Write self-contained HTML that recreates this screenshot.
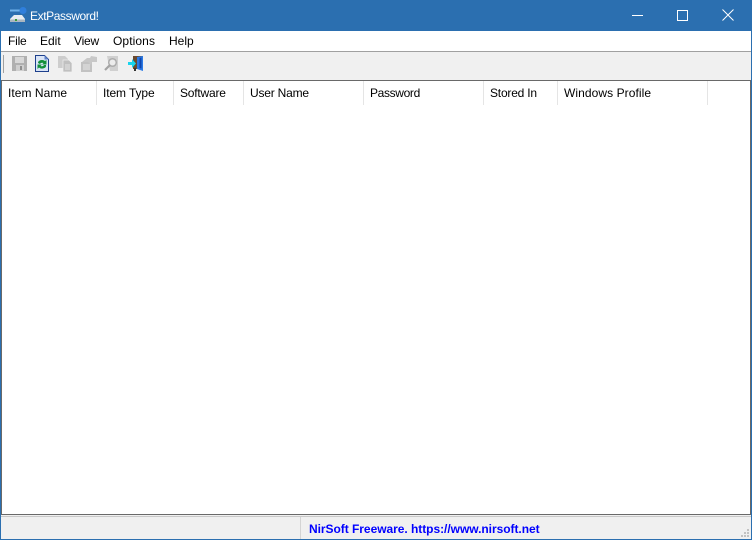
<!DOCTYPE html>
<html>
<head>
<meta charset="utf-8">
<style>
html,body{margin:0;padding:0;background:#fff}
#w{position:relative;width:752px;height:540px;overflow:hidden;background:#f0f0f0;font-family:"Liberation Sans",sans-serif;font-size:12px;color:#000}
#w div,#w svg{position:absolute}
.t{white-space:nowrap;line-height:16px;height:16px}
.sep{top:81px;width:1px;height:24px;background:#e5e5e5}
.g{width:2px;height:2px;background:#c2c2c2}
</style>
</head>
<body>
<div id="w">
<div style="left:0;top:0;width:752px;height:31px;background:#2b6fb0"></div>
<div style="left:0;top:31px;width:1px;height:509px;background:#2b6fb0"></div>
<div style="left:751px;top:31px;width:1px;height:509px;background:#2b6fb0"></div>
<div style="left:0;top:539px;width:752px;height:1px;background:#2b6fb0"></div>

<svg style="left:9px;top:7px" width="18" height="16" viewBox="0 0 18 16">
<path d="M1 3.500h12" stroke="#6fb2ea" stroke-width="2"/>
<circle cx="14" cy="3.500" r="3.500" fill="#2f7fdc"/>
<path d="M1 12l4-4h8l3 4v2H1z" fill="#e8eef2"/>
<path d="M1 12.500h15V15H1z" fill="#aab6c0"/>
<rect x="6" y="12" width="2" height="2" fill="#3a9a3a"/>
</svg>
<div class="t" style="left:30px;top:8px;color:#fff;letter-spacing:-.4px">ExtPassword!</div>

<div style="left:632px;top:15px;width:11px;height:1px;background:#fff"></div>
<div style="left:677px;top:10px;width:9px;height:9px;border:1px solid #fff"></div>
<svg style="left:722px;top:9px" width="12" height="12" viewBox="0 0 12 12"><path d="M.5.5l11 11M11.500.5l-11 11" stroke="#fff" stroke-width="1" fill="none"/></svg>

<div style="left:1px;top:31px;width:750px;height:20px;background:#fff"></div>
<div class="t" style="left:8px;top:33px;letter-spacing:-.2px">File</div>
<div class="t" style="left:40px;top:33px">Edit</div>
<div class="t" style="left:74px;top:33px;letter-spacing:-.2px">View</div>
<div class="t" style="left:113px;top:33px;letter-spacing:.1px">Options</div>
<div class="t" style="left:169px;top:33px">Help</div>

<div style="left:1px;top:51px;width:750px;height:1px;background:#a0a0a0"></div>
<div style="left:3px;top:55px;width:1px;height:18px;background:#a0a0a0"></div>

<svg style="left:12px;top:56px" width="15" height="15" viewBox="0 0 15 15"><path d="M0 0h15v15H0z" fill="#b0b0b0"/><path d="M3 1h9v6H3z" fill="#d8d8d8"/><path d="M4 9h8v6H4z" fill="#cfcfcf"/><path d="M8 10h2v4H8z" fill="#8f8f8f"/></svg>

<svg style="left:35px;top:55px" width="14" height="17" viewBox="0 0 14 17"><path d="M.5.500h9l4 4v12H.5z" fill="#d9e4f6" stroke="#1d3f8c"/><path d="M9.500.5l4 4h-4z" fill="#5f82cc"/><path d="M3 8a4 3 0 0 1 7-2l1.500-1v4.500H7l1.500-1.500a2.500 2 0 0 0-3.500 1z" fill="#12903a"/><path d="M11 10a4 3 0 0 1-7 2.500L2.500 14V9.500H7L5.500 11a2.500 2 0 0 0 3.500-1z" fill="#12903a"/></svg>

<svg style="left:58px;top:56px" width="15" height="16" viewBox="0 0 15 16"><path d="M0 0h7l3 3v9H0z" fill="#cdcdcd"/><path d="M5 4h6l3 3v9H5z" fill="#c0c0c0" stroke="#f0f0f0" stroke-width=".7"/><path d="M7 9h5M7 11h5M7 13h5" stroke="#e3e3e3"/></svg>

<svg style="left:81px;top:56px" width="16" height="16" viewBox="0 0 16 16"><path d="M0 6h11v10H0z" fill="#c2c2c2"/><path d="M2 9h7M2 11h7M2 13h7" stroke="#e6e6e6"/><path d="M1 6l5-4h3l1-2 6 1v5h-5l-1 3-3-3z" fill="#c8c8c8"/></svg>

<svg style="left:104px;top:56px" width="15" height="16" viewBox="0 0 15 16"><path d="M3 0h11v15H6z" fill="#d0d0d0"/><circle cx="8.500" cy="6.500" r="3.800" fill="#ececec" stroke="#adadad" stroke-width="1.500"/><path d="M6 9l-5 5" stroke="#a4a4a4" stroke-width="2.200"/></svg>

<svg style="left:127px;top:55px" width="17" height="17" viewBox="0 0 17 17"><path d="M6 1h10v13H6z" fill="#6a4a30"/><path d="M10 2l6-1v15l-6-2z" fill="#2a7ae6"/><path d="M12.500 3l2-.5v11l-2-.5z" fill="#0e45ad"/><path d="M1 7h4V4l4 4.500L5 13v-3H1z" fill="#18d4ee"/><path d="M7 13h2v3H7z" fill="#333"/></svg>

<div style="left:1px;top:80px;width:750px;height:435px;background:#fff;box-sizing:border-box;border:1px solid #696969"></div>

<div class="sep" style="left:96px"></div>
<div class="sep" style="left:173px"></div>
<div class="sep" style="left:243px"></div>
<div class="sep" style="left:363px"></div>
<div class="sep" style="left:483px"></div>
<div class="sep" style="left:557px"></div>
<div class="sep" style="left:707px"></div>

<div class="t" style="left:8px;top:85px;letter-spacing:.05px">Item Name</div>
<div class="t" style="left:103px;top:85px;letter-spacing:-.1px">Item Type</div>
<div class="t" style="left:180px;top:85px;letter-spacing:-.2px">Software</div>
<div class="t" style="left:250px;top:85px;letter-spacing:-.2px">User Name</div>
<div class="t" style="left:370px;top:85px;letter-spacing:-.35px">Password</div>
<div class="t" style="left:490px;top:85px;letter-spacing:-.2px">Stored In</div>
<div class="t" style="left:564px;top:85px;letter-spacing:.07px">Windows Profile</div>

<div style="left:1px;top:516px;width:750px;height:1px;background:#c8c8c8"></div>
<div style="left:300px;top:517px;width:1px;height:22px;background:#d4d4d4"></div>
<div class="t" style="left:309px;top:521px;color:#0000ff;font-weight:bold;letter-spacing:-.04px">NirSoft Freeware. https://www.nirsoft.net</div>

<div class="g" style="left:747px;top:529px"></div>
<div class="g" style="left:747px;top:532px"></div>
<div class="g" style="left:744px;top:532px"></div>
<div class="g" style="left:747px;top:535px"></div>
<div class="g" style="left:744px;top:535px"></div>
<div class="g" style="left:741px;top:535px"></div>
</div>
</body>
</html>
